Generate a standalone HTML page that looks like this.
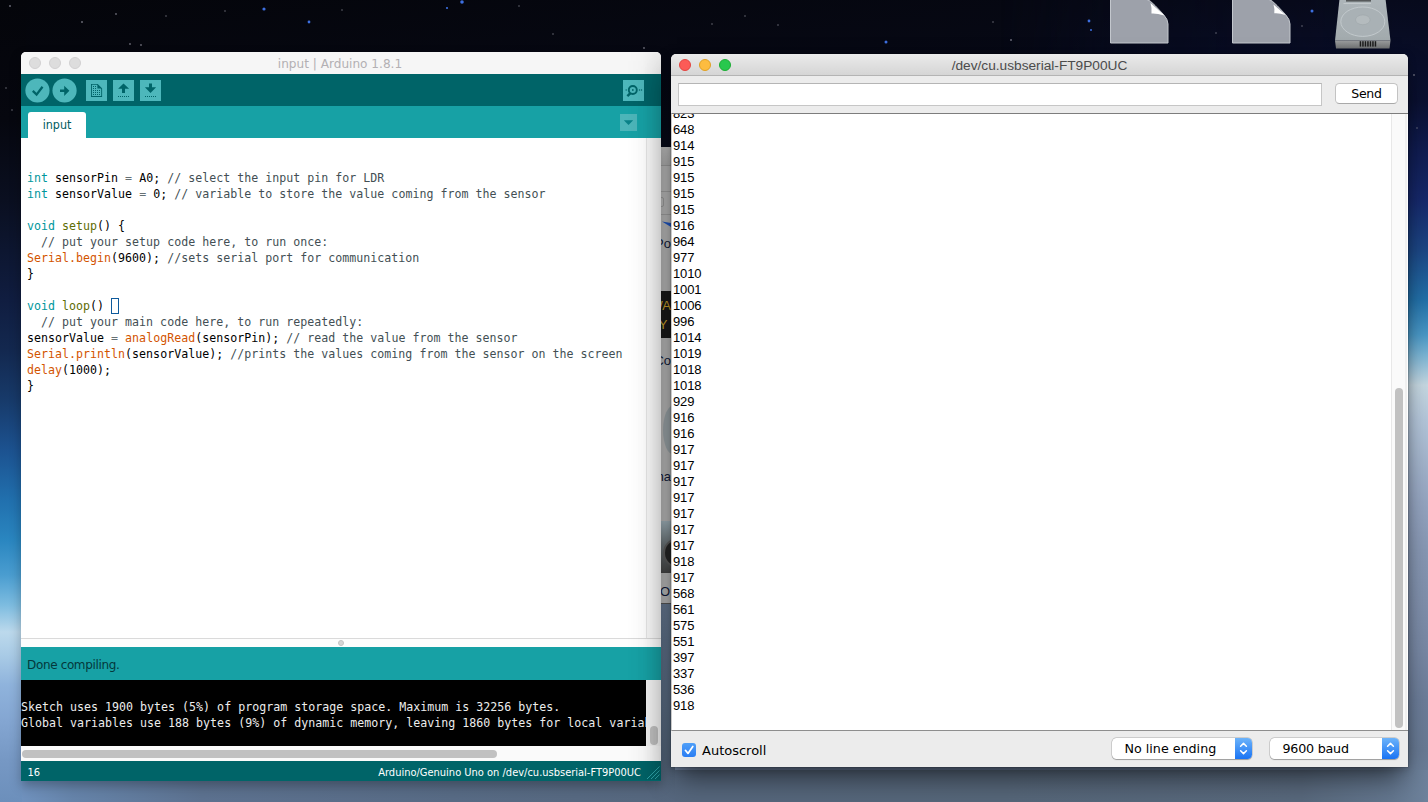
<!DOCTYPE html>
<html lang="en">
<head>
<meta charset="utf-8">
<title>Arduino - Serial Monitor</title>
<style>
*{box-sizing:border-box;margin:0;padding:0}
html,body{width:1428px;height:802px;overflow:hidden}
body{position:relative;background:#070a18;font-family:"Liberation Sans","DejaVu Sans",sans-serif;-webkit-font-smoothing:antialiased}
.abs{position:absolute}
#wall{left:0;top:0;width:1428px;height:802px;background:linear-gradient(172deg,#04050a 0%,#070916 22%,#0b1430 36%,#173f78 47%,#3f86c4 54%,#9cc0e0 60%,#a4b6cc 68%,#8494b2 78%,#6b7d9c 90%,#7487a8 100%)}
#wl{left:0;top:0;width:26px;height:802px;background:linear-gradient(180deg,#04050a 0,#06070f 120px,#0a0f20 200px,#101d40 300px,#13284f 350px,#173a6a 400px,#1c5290 450px,#2170ae 500px,#2a86c0 540px,#4a9dd0 575px,#7dbce0 605px,#bcd9ec 632px,#a9cbe6 655px,#8fb3dc 685px,#84a6d2 720px,#7698c4 760px,#6c8fbb 802px)}
#wr{left:1000px;top:0;width:428px;height:802px;-webkit-mask-image:linear-gradient(90deg,transparent 0,rgba(0,0,0,.55) 150px,#000 400px);mask-image:linear-gradient(90deg,transparent 0,rgba(0,0,0,.55) 150px,#000 400px);background:linear-gradient(180deg,#070a1c 0,#0a1030 100px,#101c50 150px,#16286a 200px,#1c4684 250px,#2270a8 300px,#4a98c6 335px,#7ab4d4 355px,#c6d8e2 385px,#b4c6da 420px,#a2b3cb 465px,#94a4c0 505px,#8898b4 550px,#8090ac 600px,#7888a4 650px,#6c7d99 700px,#687a94 750px,#6e829c 802px)}
#wg{left:655px;top:600px;width:20px;height:202px;background:linear-gradient(180deg,#65778f 0,#5e7088 40px,#586a80 110px,#526378 170px,#56677e 202px)}
#wb{left:22px;top:770px;width:1406px;height:32px;background:linear-gradient(90deg,#6f91bd 0,#6583a9 50px,#5c718f 180px,#576a84 430px,#55667c 680px,#566679 980px,#58687c 1280px,#63768e 1370px,#6e829c 1406px)}

#bgwin{left:650px;top:147px;width:30px;height:457px;background:#b7b7b7;overflow:hidden;border-bottom:1px solid #555}
#bgwin .t{font:13px/16px "Liberation Sans",sans-serif;color:#111a3a;white-space:nowrap}
/* Arduino window */
#ard{left:21px;top:52px;width:640px;height:728.500px;border-radius:5px 5px 0 0;overflow:hidden;background:#fff;box-shadow:0 5px 12px rgba(0,0,0,.28)}
#ard .tb{left:0;top:0;width:640px;padding-right:2px;height:22px;background:#f6f6f6;text-align:center;font:12.1px/24px "DejaVu Sans",sans-serif;color:#b3b0b3;overflow:hidden}
.tl{position:absolute;width:12px;height:12px;border-radius:50%;top:5px}
#ard .tl{background:#dddddd;border:1px solid #d1d0d1}
#ard .tools{left:0;top:22px;width:640px;height:32px;background:#006468}
#ard .tabs{left:0;top:54px;width:640px;height:32px;background:#17a1a5}
.cbtn{position:absolute;width:24.2px;height:24.2px;border-radius:50%;background:#4db7bb;top:26.3px}
.cbtn svg,.sbtn svg{position:absolute;left:0;top:0;display:block}
.sbtn{position:absolute;width:21px;height:21px;background:#4db7bb;top:28px}
#tab{left:7px;top:60px;width:58px;height:26px;background:#fff;border-radius:3px 3px 0 0;text-align:center;font:12.4px/25px "DejaVu Sans Condensed","DejaVu Sans",sans-serif;color:#005c5f}
#code{left:0;top:86px;width:625px;height:500px;background:#fff;font:11.627px/16px "DejaVu Sans Mono","Liberation Mono",monospace;white-space:pre;color:#000;padding-left:6px;letter-spacing:.017px}
.k{color:#00979c}.f{color:#5e6d03}.o{color:#d35400}.c{color:#434f54}.q{color:#667175}
#gut1{left:625px;top:86px;width:15px;height:500px;background:#fafafa;border-left:1px solid #e6e6e6}
#div{left:0;top:586px;width:640px;height:9px;background:#fdfdfd;border-top:1px solid #dadada}
#div i{position:absolute;left:317px;top:1px;width:6px;height:6px;border-radius:50%;background:#d6d6d6;border:1px solid #c4c4c4}
#st{left:0;top:595px;width:640px;height:33px;background:#17a1a5;font:12px/36px "DejaVu Sans",sans-serif;color:#04383b;padding-left:6px;letter-spacing:-.35px}
#con{left:0;top:628px;width:625px;height:66px;background:#000;color:#ededed;font:11.627px/16px "DejaVu Sans Mono","Liberation Mono",monospace;white-space:pre;padding-top:19px;overflow:hidden;letter-spacing:.015px}
#gut2{left:625px;top:628px;width:15px;height:66px;background:#f4f4f4}
#gut2 i{position:absolute;left:4px;top:46px;width:8px;height:19px;border-radius:4px;background:#c1c1c1}
#hs{left:0;top:694px;width:640px;height:15px;background:#fafafa}
#hs i{position:absolute;left:1px;top:4px;width:475px;height:8px;border-radius:4px;background:#c1c1c1}
#bs{left:0;top:709px;width:640px;height:20px;background:#006468;color:#fff;font:11px/23px "DejaVu Sans Condensed","DejaVu Sans",sans-serif}
#ashade{left:606px;top:0;width:34px;height:728px;background:linear-gradient(90deg,rgba(0,0,0,0) 0,rgba(0,0,0,.025) 45%,rgba(0,0,0,.13) 100%);-webkit-mask-image:linear-gradient(180deg,rgba(0,0,0,.35) 0,#000 40px);mask-image:linear-gradient(180deg,rgba(0,0,0,.35) 0,#000 40px)}

/* Serial monitor */
#ser{overflow:hidden;left:671px;top:54px;width:736.500px;height:713px;border-radius:5px 5px 0 0;background:#ececec;box-shadow:0 16px 26px -6px rgba(0,0,0,.55),0 2px 9px rgba(0,0,0,.22),0 0 0 .5px rgba(0,0,0,.2)}
#ser .tb{left:0;top:0;width:737px;height:22px;border-radius:5px 5px 0 0;background:linear-gradient(#ebebeb,#d5d5d5);border-bottom:1px solid #b4b4b4;text-align:center;font:13.7px/24px "Liberation Sans",sans-serif;color:#4b4b4b}
#inp{left:7px;top:29px;width:644px;height:23px;background:#fff;border:1px solid #c6c6c6;border-top-color:#b5b5b5}
#send{left:664px;top:29px;width:63px;height:21px;background:#fff;border:1px solid #c3c3c3;border-bottom-color:#a9a9a9;border-radius:4.5px;text-align:center;font:12.5px/19px "DejaVu Sans",sans-serif;color:#000;letter-spacing:-.3px}
#ta{left:0;top:59px;width:737px;height:618px;background:#fff;border-top:1px solid #7d7d7d;border-bottom:1px solid #8e8e8e;border-left:1px solid #c9c9c9;overflow:hidden}
#nums{left:1px;top:-8px;font:13px/16px "Liberation Sans",sans-serif;color:#000;white-space:pre;letter-spacing:-.16px}
#gut3{left:719px;top:0;width:16px;height:616px;background:#fafafa;border-left:1px solid #e8e8e8;border-right:2px solid #f0f0f0}
#gut3 i{position:absolute;left:3px;top:274px;width:8px;height:340px;border-radius:4px;background:#c1c1c1}
#bot{left:0;top:677px;width:737px;height:36px;background:#ececec}
#cb{left:11px;top:12px;width:14px;height:14px;border-radius:3px;background:linear-gradient(#4f9ff8,#2a7df3)}
#cb svg,.sel b svg{position:absolute;left:0;top:0;display:block}
#as{left:31px;top:10px;font:13px/20px "DejaVu Sans",sans-serif;color:#000}
.sel{position:absolute;top:7px;height:21px;white-space:nowrap;background:#fff;border-radius:4.5px;box-shadow:0 0 0 .5px rgba(0,0,0,.22),0 .5px 1px rgba(0,0,0,.25);font:12.7px/21px "DejaVu Sans",sans-serif;color:#000;padding-left:13px}
.sel b{position:absolute;right:0;top:0;width:17px;height:21px;border-radius:0 4.5px 4.5px 0;background:linear-gradient(#6cb3fa,#1a74f4)}
</style>
</head>
<body>
<div id="wall" class="abs"></div>
<div id="wl" class="abs"></div>
<div id="wr" class="abs"></div>
<div id="wb" class="abs"></div>
<div id="wg" class="abs"></div>

<svg id="stars" class="abs" style="left:0;top:0" width="1428" height="160" viewBox="0 0 1428 160">
 <g fill="#3d6fe0"><circle cx="264" cy="9" r="1.6"/><circle cx="309" cy="22" r="1.4"/><circle cx="462" cy="2" r="1.8"/><circle cx="447" cy="8" r="1.1"/><circle cx="886" cy="42" r="1.5"/><circle cx="1089" cy="21" r="1.4"/><circle cx="1312" cy="11" r="1.5"/><circle cx="1091" cy="30" r="1"/></g>
 <g fill="#8f8f9c" opacity=".7"><circle cx="10" cy="6" r="1"/><circle cx="82" cy="22" r="1"/><circle cx="116" cy="14" r=".9"/><circle cx="130" cy="44" r=".9"/><circle cx="141" cy="45" r=".9"/><circle cx="166" cy="16" r=".8"/><circle cx="225" cy="11" r=".8"/><circle cx="342" cy="10" r=".8"/><circle cx="519" cy="6" r=".8"/><circle cx="553" cy="34" r=".8"/><circle cx="644" cy="48" r=".9"/><circle cx="712" cy="24" r=".8"/><circle cx="745" cy="16" r=".8"/><circle cx="778" cy="25" r=".8"/><circle cx="993" cy="22" r=".8"/><circle cx="1011" cy="40" r="1"/><circle cx="1216" cy="33" r=".8"/><circle cx="1302" cy="26" r=".8"/><circle cx="1414" cy="75" r=".9"/><circle cx="1417" cy="128" r=".8"/><circle cx="6" cy="88" r=".8"/><circle cx="12" cy="110" r=".8"/></g>
</svg>
<svg id="icons" class="abs" style="left:1100px;top:0" width="300" height="52" viewBox="0 0 300 52">
 <defs>
  <linearGradient id="hd" x1="0" y1="0" x2="0" y2="1"><stop offset="0" stop-color="#aeb6ba"/><stop offset="1" stop-color="#a2aaad"/></linearGradient>
  <linearGradient id="hf" x1="0" y1="0" x2="0" y2="1"><stop offset="0" stop-color="#9a9c9d"/><stop offset="1" stop-color="#6f7172"/></linearGradient>
 </defs>
 <path d="M10.500 -1 H46 Q50 0 55 5.500 L63.500 14.500 Q68 19.500 68 24 V43 H10.500 Z" fill="#9da1aa" stroke="#c3c7cd" stroke-width="1"/>
 <path d="M50.5 3 L64.5 15.5 Q56 13 51.5 13.5 Q52 8 50.5 3 Z" fill="#fff"/>
 <path d="M132.500 -1 H168 Q172 0 177 5.500 L185.500 14.500 Q190 19.500 190 24 V43 H132.500 Z" fill="#9da1aa" stroke="#c3c7cd" stroke-width="1"/>
 <path d="M173.500 4.500 L185.500 15 Q179 12.800 174.300 13.300 Q174.800 8.500 173.500 4.500 Z" fill="#fff"/>
 <path d="M239.500 -1 H285.500 L290.500 40.500 H235 Z" fill="url(#hd)"/>
 <path d="M235 40.500 H290.500 L289.500 48.500 H236 Z" fill="url(#hf)"/>
 <ellipse cx="262.800" cy="21.700" rx="22" ry="14.700" fill="#a9b1b5" stroke="#c5cccf" stroke-width=".9"/>
 <ellipse cx="262.800" cy="19.800" rx="7.300" ry="4.900" fill="#b4bbbe" stroke="#9ea6aa" stroke-width=".6"/>
 <rect x="246" y="-1" width="25" height="2.600" fill="#55585a"/>
 <rect x="243.500" y="3" width="27.500" height="1" fill="#c3c9cc"/>
 <g fill="#1c1c1c"><rect x="259.700" y="41.200" width="1.500" height="5.400"/><rect x="262.200" y="41.200" width="1.500" height="5.400"/><rect x="264.700" y="41.200" width="1.500" height="5.400"/><rect x="267.200" y="41.200" width="1.500" height="5.400"/><rect x="269.700" y="41.200" width="1.500" height="5.400"/><rect x="272.200" y="41.200" width="1.500" height="5.400"/><rect x="274.700" y="41.200" width="1.500" height="5.400"/></g>
</svg>
<div id="bgwin" class="abs">
  <div class="abs" style="left:0;top:0;width:30px;height:19px;background:linear-gradient(#bdbdbd,#adadad);border-bottom:1px solid #9a9a9a"></div>
  <div class="abs" style="left:0;top:44px;width:30px;height:1px;background:#9e9e9e"></div>
  <div class="abs" style="left:0;top:67px;width:30px;height:1px;background:#9e9e9e"></div>
  <div class="abs" style="left:0;top:50px;width:14px;height:10px;border:1px solid #9a9a9a;border-radius:2px;background:#b9b9b9"></div>
  <svg class="abs" style="left:10px;top:72px" width="12" height="10" viewBox="0 0 12 10"><path d="M2 2.500 L11 4 V8 Z" fill="#1e55c2"/></svg>
  <div class="abs t" style="right:9px;top:89px">Po</div>
  <div class="abs" style="left:0;top:144px;width:30px;height:47px;background:#1b1b1b;color:#c9a02c;font:13px/19px 'Liberation Sans',sans-serif;text-align:right;padding:5px 9px 0 0">WA<br>Y&nbsp;</div>
  <div class="abs t" style="right:9px;top:206px">Co</div>
  <div class="abs" style="left:13px;top:258px;width:22px;height:50px;border-radius:50%;background:#8f9ba0;opacity:.75"></div>
  <div class="abs t" style="right:9px;top:322px">ma</div>
  <div class="abs" style="left:0;top:374px;width:30px;height:52px;background:linear-gradient(#9eb0b8,#6a7276 45%,#454545)"></div>
  <div class="abs" style="left:13px;top:391px;width:30px;height:30px;border-radius:50%;background:#262626;border:2px solid #5c5c5c"></div>
  <div class="abs t" style="right:10px;top:437px">O</div>
</div>

<div id="ard" class="abs">
  <div class="tb abs">input | Arduino 1.8.1</div>
  <span class="tl" style="left:8px"></span><span class="tl" style="left:28px"></span><span class="tl" style="left:48px"></span>
  <div class="tools abs"></div>
  <div class="tabs abs"></div>
  <svg class="abs" style="left:0;top:22px" width="640" height="64" viewBox="0 0 640 64">
   <g fill="#4db7bb">
    <circle cx="16.450" cy="16.500" r="12.100"/><circle cx="43.550" cy="16.500" r="12.100"/>
    <rect x="65" y="6" width="21" height="21"/><rect x="92" y="6" width="21" height="21"/><rect x="119" y="6" width="21" height="21"/>
    <rect x="602" y="6" width="21" height="21"/>
    <rect x="599" y="40" width="17" height="17" fill="#4cb5b9"/>
   </g>
   <g fill="#006468">
    <path d="M11.800 16.900 L15.600 20.600 L21.500 12.700" fill="none" stroke="#006468" stroke-width="2.300"/>
    <path d="M39 15.400 H43.200 V11.700 L48.400 16.800 L43.200 22 V18.100 H39 Z"/>
    <path d="M70 9.900 H76.600 L81.100 14.400 V23 H70 Z M70.900 10.800 V22.100 H80.200 V14.800 L76.200 10.800 Z" fill-rule="evenodd"/>
    <path d="M76.400 10 L81 14.600 H76.400 Z"/>
    <rect x="72" y="12" width="1" height="1"/><rect x="74" y="12" width="1" height="1"/><rect x="72" y="14" width="1" height="1"/><rect x="74" y="14" width="1" height="1"/><rect x="72" y="16" width="1" height="1"/><rect x="74" y="16" width="1" height="1"/><rect x="76" y="16" width="1" height="1"/><rect x="78" y="16" width="1" height="1"/><rect x="72" y="18" width="1" height="1"/><rect x="74" y="18" width="1" height="1"/><rect x="76" y="18" width="1" height="1"/><rect x="78" y="18" width="1" height="1"/><rect x="72" y="20" width="1" height="1"/><rect x="74" y="20" width="1" height="1"/><rect x="76" y="20" width="1" height="1"/><rect x="78" y="20" width="1" height="1"/>
    <path d="M102.500 9.600 L108.100 14.800 H104 V18.900 H101 V14.800 H97.100 Z"/>
    <g transform="translate(97 0)"><rect x="0" y="22" width="1" height="1"/><rect x="2" y="22" width="1" height="1"/><rect x="4" y="22" width="1" height="1"/><rect x="6" y="22" width="1" height="1"/><rect x="8" y="22" width="1" height="1"/><rect x="10" y="22" width="1" height="1"/></g>
    <path d="M128 9.400 H131 V13.300 H135.100 L129.500 19.100 L123.900 13.300 H128 Z"/>
    <g transform="translate(124 0)"><rect x="0" y="22" width="1" height="1"/><rect x="2" y="22" width="1" height="1"/><rect x="4" y="22" width="1" height="1"/><rect x="6" y="22" width="1" height="1"/><rect x="8" y="22" width="1" height="1"/><rect x="10" y="22" width="1" height="1"/></g>
    <rect x="611" y="15.200" width="1.600" height="1.600"/>
    <path d="M608.600 18.200 L610.300 20 L607.200 23 L605.500 21.200 Z"/>
    <rect x="604.600" y="15.400" width="1.200" height="1.200"/><rect x="617.900" y="15.400" width="1.200" height="1.200"/><rect x="619.900" y="15.400" width="1.200" height="1.200"/>
    <path d="M602.800 46.200 H612.200 L607.500 51 Z" fill="#0a8288"/>
   </g>
   <circle cx="611.800" cy="16" r="4" fill="none" stroke="#006468" stroke-width="1.900"/>
  </svg>
  <div id="tab" class="abs">input</div>
<div id="code" class="abs">

<span class="k">int</span> sensorPin <span class="q">=</span> A0; <span class="c">// select the input pin for LDR</span>
<span class="k">int</span> sensorValue <span class="q">=</span> 0; <span class="c">// variable to store the value coming from the sensor</span>

<span class="k">void</span> <span class="f">setup</span>() {
<span class="c">  // put your setup code here, to run once:</span>
<span class="o">Serial.begin</span>(9600); <span class="c">//sets serial port for communication</span>
}

<span class="k">void</span> <span class="f">loop</span>() 
<span class="c">  // put your main code here, to run repeatedly:</span>
sensorValue <span class="q">=</span> <span class="o">analogRead</span>(sensorPin); <span class="c">// read the value from the sensor</span>
<span class="o">Serial.println</span>(sensorValue); <span class="c">//prints the values coming from the sensor on the screen</span>
<span class="o">delay</span>(1000);
}</div>
  <span class="abs" style="left:90px;top:246px;width:8px;height:16px;border:1px solid #0e5a9c"></span>
  <div id="gut1" class="abs"></div>
  <div id="div" class="abs"><i></i></div>
  <div id="st" class="abs">Done compiling.</div>
<div id="con" class="abs">Sketch uses 1900 bytes (5%) of program storage space. Maximum is 32256 bytes.
Global variables use 188 bytes (9%) of dynamic memory, leaving 1860 bytes for local variables. Maximum is 2048 bytes.</div>
  <div id="gut2" class="abs"><i></i></div>
  <div id="hs" class="abs"><i></i></div>
  <div id="bs" class="abs"><span class="abs" style="left:6.500px">16</span><span class="abs" style="right:20px;white-space:nowrap">Arduino/Genuino Uno on /dev/cu.usbserial-FT9P00UC</span></div>
  <svg class="abs" style="left:625px;top:714px" width="15" height="14" viewBox="0 0 15 14"><path d="M1 13 L13.500 0.500 M5 13 L13.500 4.500 M9 13 L13.500 8.500" stroke="#2fa5aa" stroke-width="1" fill="none"/></svg>
  <div id="ashade" class="abs"></div>
</div>

<div id="ser" class="abs">
  <div class="tb abs">/dev/cu.usbserial-FT9P00UC</div>
  <span class="tl" style="left:8px;background:#fc5b57;border:1px solid #e2443f"></span>
  <span class="tl" style="left:28px;background:#fdbc40;border:1px solid #dfa023"></span>
  <span class="tl" style="left:48px;background:#28c84e;border:1px solid #1bad33"></span>
  <div id="inp" class="abs"></div>
  <div id="send" class="abs">Send</div>
  <div id="ta" class="abs">
<div id="nums" class="abs">823
648
914
915
915
915
915
916
964
977
1010
1001
1006
996
1014
1019
1018
1018
929
916
916
917
917
917
917
917
917
917
918
917
568
561
575
551
397
337
536
918</div>
    <div id="gut3" class="abs"><i></i></div>
  </div>
  <div id="bot" class="abs">
    <span id="cb" class="abs"><svg width="14" height="14" viewBox="0 0 14 14"><path d="M3.4 7.3 L6 10.4 L10.8 3.4" fill="none" stroke="#fff" stroke-width="1.7" stroke-linecap="round" stroke-linejoin="round"/></svg></span>
    <span id="as" class="abs">Autoscroll</span>
    <div class="sel" style="left:440.500px;width:140.500px">No line ending<b><svg width="17" height="21" viewBox="0 0 17 21"><path d="M5.6 8.3 L8.5 5.4 L11.4 8.3 M5.6 12.7 L8.5 15.6 L11.4 12.7" fill="none" stroke="#fff" stroke-width="1.5" stroke-linecap="round" stroke-linejoin="round"/></svg></b></div>
    <div class="sel" style="left:598.500px;width:129.500px;letter-spacing:-.22px">9600 baud<b><svg width="17" height="21" viewBox="0 0 17 21"><path d="M5.6 8.3 L8.5 5.4 L11.4 8.3 M5.6 12.7 L8.5 15.6 L11.4 12.7" fill="none" stroke="#fff" stroke-width="1.5" stroke-linecap="round" stroke-linejoin="round"/></svg></b></div>
  </div>
</div>
</body>
</html>
